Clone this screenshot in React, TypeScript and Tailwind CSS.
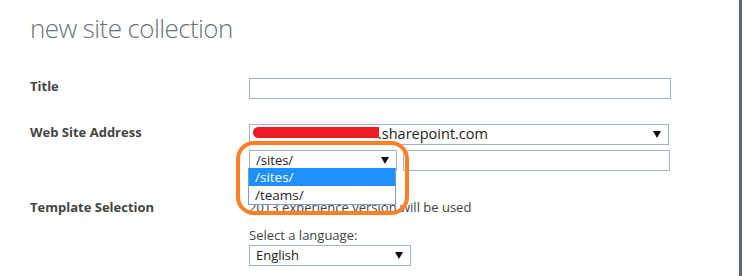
import React from "react";

function Arrow() {
  return (
    <svg width="8" height="7" viewBox="0 0 8 7" className="shrink-0">
      <path d="M0 0h8L4 7z" fill="#111" />
    </svg>
  );
}

function Select({ value, className }: { value: React.ReactNode; className: string }) {
  return (
    <div className={`flex h-[21px] items-center justify-between border border-[#a3b3c3] bg-white pl-[6px] pr-[7px] text-[13px] text-[#222] ${className}`}>
      <span className="leading-none">{value}</span>
      <Arrow />
    </div>
  );
}

export default function App() {
  return (
    <div className="flex h-[276px] w-[742px] overflow-hidden bg-white font-['Segoe_UI','Open_Sans',sans-serif]">
      <div className="relative flex-1 pl-[30px]">
        <h1 className="pt-[12px] text-[26px] font-light leading-[32px] tracking-[-0.6px] text-[#6b737d]">new site collection</h1>

        <div className="mt-[33px] flex items-center">
          <div className="w-[219px] pb-[3px] text-[13px] font-bold text-[#444]">Title</div>
          <div className="h-[21px] w-[422px] border border-[#a3b3c3]" />
        </div>

        <div className="mt-[24px] flex">
          <div className="w-[219px] text-[13px] leading-[17px] font-bold text-[#444]">Web Site Address</div>
          <div className="flex flex-col gap-[5px]">
            <div className="relative">
              <Select value={<span className="pl-[122px] text-[14.5px]">.sharepoint.com</span>} className="w-[420px]" />
              <div className="absolute left-[4px] top-[3px] h-[11px] w-[126px] rounded-l-full rounded-r-[3px] bg-[#ed1c24]" />
            </div>
            <div className="flex gap-[6px]">
              <Select value="/sites/" className="w-[148px] border-[#5f7a8c]" />
              <div className="h-[21px] w-[267px] border border-[#a3b3c3]" />
            </div>
          </div>
        </div>

        <div className="mt-[27px] flex">
          <div className="w-[219px] text-[13px] leading-[19px] font-bold text-[#444]">Template Selection</div>
          <div className="flex flex-col">
            <div className="text-[13px] leading-[19px] text-[#444]">2013 experience version will be used</div>
            <div className="mt-[9px] text-[13px] leading-[19px] text-[#444]">Select a language:</div>
            <Select value="English" className="mt-0 w-[162px]" />
          </div>
        </div>

        <div className="absolute left-[248px] top-[168px] w-[148px] border border-t-0 border-[#7a9cc8] bg-white text-[13.5px] text-[#222]">
          <div className="flex h-[18px] items-center bg-[#1e90ff] pl-[6px] text-white">/sites/</div>
          <div className="flex h-[18px] items-center pl-[6px]">/teams/</div>
        </div>

        <div className="pointer-events-none absolute left-[236px] top-[141px] h-[74px] w-[173px] rounded-[18px] border-[4px] border-[#ff7f27]" />
      </div>
      <div className="w-[3px] bg-[#5c6675]" />
    </div>
  );
}
